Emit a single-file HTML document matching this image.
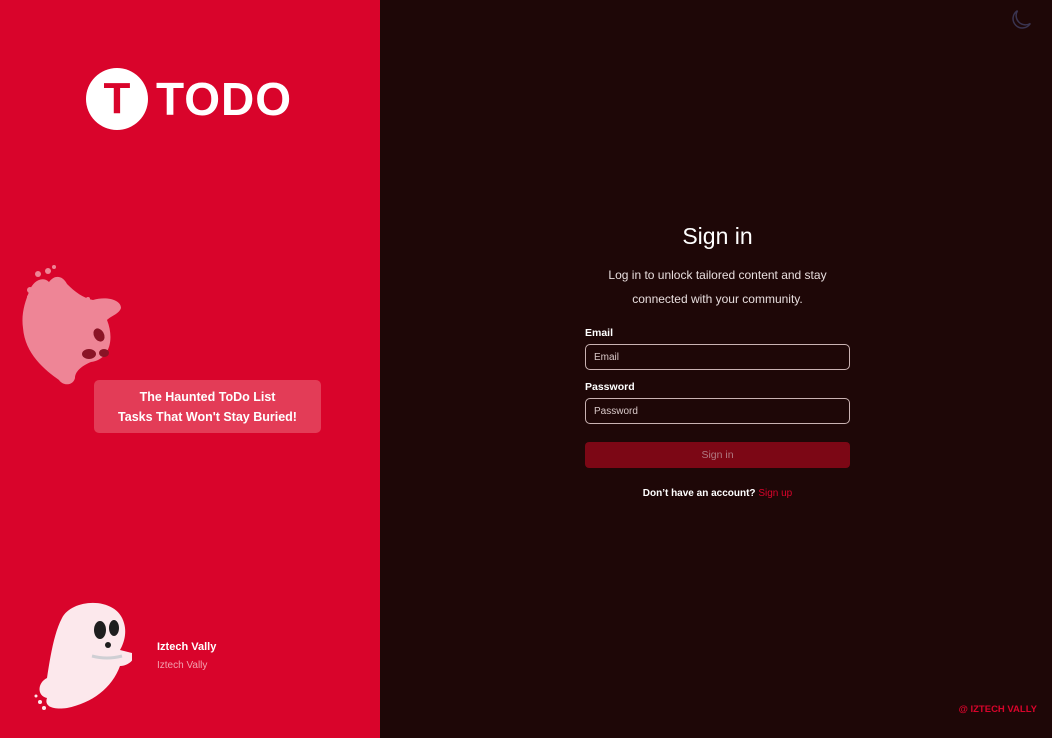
<!DOCTYPE html>
<html><head><meta charset="utf-8"><style>
*{margin:0;padding:0;box-sizing:border-box}
body{width:1052px;height:738px;overflow:hidden;font-family:"Liberation Sans",sans-serif;position:relative;background:#1e0707}
.left{position:absolute;left:0;top:0;width:380px;height:738px;background:#d9042b}
.right{position:absolute;left:380px;top:0;width:672px;height:738px;background:#1e0707;color:#fff}
.logo{position:absolute;left:86px;top:68px}
.logo .c{position:absolute;left:0;top:0;width:62px;height:62px;border-radius:50%;background:#fff;color:#d9042b;font:900 44px/62px "Liberation Sans";text-align:center}
.logo .t{position:absolute;left:70px;top:6px;color:#fff;font:900 46px/50px "Liberation Sans";letter-spacing:1px;white-space:nowrap}
.banner{position:absolute;left:94px;top:380px;width:227px;height:53px;background:#e33c57;border-radius:5px;color:#fff;font:900 12.5px/20px "Liberation Sans";text-align:center;padding-top:7px}
.name{position:absolute;left:157px;top:641px;color:#fff;font-weight:bold;font-size:11px}
.sub{position:absolute;left:157px;top:660px;color:#f3a0ae;font-size:10px}
h1{position:absolute;left:0;width:675px;top:223px;text-align:center;font-size:23px;font-weight:normal;left:0}
.desc{position:absolute;left:0;width:675px;top:263px;text-align:center;font-size:12px;line-height:24px;color:#e8dede}
.lbl{position:absolute;left:205px;font-size:10.5px;font-weight:bold}
.in{position:absolute;left:205px;width:265px;height:26px;border:1px solid #c9b2b2;border-radius:5px;font-size:10px;color:#d9c9c9;padding:7px 8px}
.btn{position:absolute;left:205px;top:442px;width:265px;height:26px;background:#7c0715;border-radius:4px;color:#b07a83;font-size:10.5px;text-align:center;line-height:26px}
.acc{position:absolute;left:0;width:675px;top:488px;text-align:center;font-size:10px;font-weight:bold}
.acc span{color:#d9042b;font-weight:normal}
.iz{position:absolute;right:15px;top:704px;color:#d9042b;font:900 9.5px "Liberation Sans"}
</style></head><body>
<div class="left">
 <div class="logo"><div class="c">T</div><div class="t">TODO</div></div>
 <svg style="position:absolute;left:15px;top:262px" width="110" height="125" viewBox="0 0 110 125">
  <g fill="#ee8596">
   <path d="M14 30 C18 18 28 14 34 20 C40 12 48 14 52 22 C60 30 68 36 78 38 C92 34 106 38 106 46 C104 52 96 54 92 58 C100 78 94 98 76 100 C66 104 60 110 60 116 C58 124 48 124 44 118 C30 108 10 92 8 66 C6 52 10 40 14 30Z"/>
   <circle cx="23" cy="12" r="3"/><circle cx="33" cy="9" r="3"/><circle cx="39" cy="5" r="2"/><circle cx="15" cy="28" r="3"/><circle cx="14" cy="35" r="2"/><circle cx="73" cy="37" r="2"/><circle cx="32" cy="102" r="3"/>
  </g>
  <g fill="#8a1426"><ellipse cx="84" cy="73" rx="5" ry="7" transform="rotate(-30 84 73)"/><ellipse cx="74" cy="92" rx="7" ry="5"/><ellipse cx="89" cy="91" rx="5" ry="4"/></g>
 </svg>
 <div class="banner">The Haunted ToDo List<br>Tasks That Won't Stay Buried!</div>
 <svg style="position:absolute;left:32px;top:598px" width="100" height="115" viewBox="0 0 100 115">
  <path d="M30 20 C40 0 85 -2 92 25 C95 35 92 45 88 52 L100 55 C105 62 95 68 88 68 C80 90 60 105 35 110 C20 112 12 108 15 100 C5 98 5 85 15 80 C18 60 22 35 30 20Z" fill="#fce8ec"/>
  <ellipse cx="68" cy="32" rx="6" ry="9" fill="#1e1e1e"/><ellipse cx="82" cy="30" rx="5" ry="8" fill="#1e1e1e"/><circle cx="76" cy="47" r="3" fill="#1e1e1e"/>
  <path d="M60 58 Q75 62 90 58" stroke="#cfcfd4" stroke-width="3" fill="none"/>
  <circle cx="8" cy="104" r="2" fill="#fce8ec"/><circle cx="12" cy="110" r="2" fill="#fce8ec"/><circle cx="4" cy="98" r="1.5" fill="#fce8ec"/>
 </svg>
 <div class="name">Iztech Vally</div>
 <div class="sub">Iztech Vally</div>
</div>
<div class="right">
 <svg style="position:absolute;left:627px;top:6px" width="28" height="28" viewBox="0 0 24 24"><path d="M20 15A8 8 0 0 1 9 4 8 8 0 1 0 20 15Z" fill="none" stroke="#3a3450" stroke-width="1.3"/></svg>
 <h1>Sign in</h1>
 <div class="desc">Log in to unlock tailored content and stay<br>connected with your community.</div>
 <div class="lbl" style="top:327px">Email</div>
 <div class="in" style="top:344px">Email</div>
 <div class="lbl" style="top:381px">Password</div>
 <div class="in" style="top:398px">Password</div>
 <div class="btn">Sign in</div>
 <div class="acc">Don’t have an account? <span>Sign up</span></div>
 <div class="iz">@ IZTECH VALLY</div>
</div>
</body></html>
